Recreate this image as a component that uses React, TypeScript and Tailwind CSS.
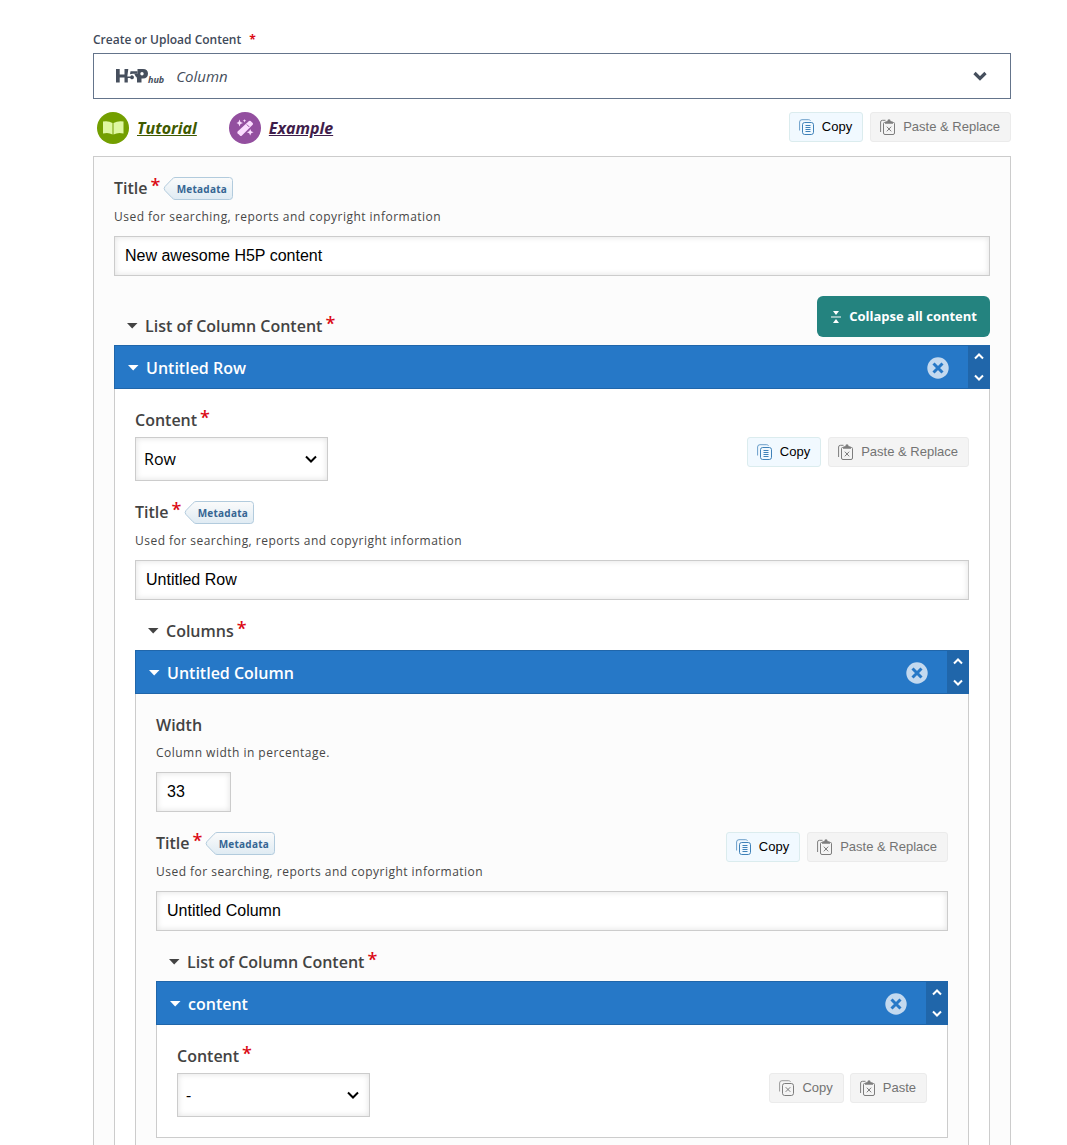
import React, { useId, useState } from "react";

function Required() {
  return <span className="ml-[3px] pb-1.5 text-lg leading-none font-semibold text-[#db0a15]" aria-hidden="true">*</span>;
}

function FieldLabel({ htmlFor, required, children }: { htmlFor: string; required?: boolean; children: React.ReactNode }) {
  return (
    <label htmlFor={htmlFor} className="flex h-[22px] items-center text-base leading-[22px] font-semibold text-[#434343]">
      {children}
      {required && <Required />}
    </label>
  );
}

function Description({ children }: { children: React.ReactNode }) {
  return <p className="mt-[7px] mb-[9px] text-xs leading-5 tracking-[0.04em] text-[#474747]">{children}</p>;
}

function TextInput({ id, value, narrow }: { id: string; value: string; narrow?: boolean }) {
  return (
    <input
      id={id}
      type="text"
      defaultValue={value}
      className={
        "block h-10 border border-[#ccc] bg-white px-2.5 font-['Liberation_Sans',Arial,sans-serif] text-base text-black shadow-[inset_0_0_6px_rgba(0,0,0,0.12)] outline-none " +
        (narrow ? "w-[75px]" : "w-full")
      }
    />
  );
}

function MetadataButton() {
  const id = useId();
  return (
    <button type="button" className="relative ml-[3px] h-[23px] w-[70px] pl-[7px] text-[10px] leading-[22px] font-bold tracking-wide text-[#356593]">
      <svg className="absolute inset-0" width="70" height="23" viewBox="0 0 70 23" aria-hidden="true">
        <defs>
          <linearGradient id={id} x1="0" y1="0" x2="0" y2="1">
            <stop offset="0" stopColor="#fbfbfb" />
            <stop offset="1" stopColor="#dfebf3" />
          </linearGradient>
        </defs>
        <path
          d="M12 .5H66.500Q69.500 .5 69.500 3.500V19.500Q69.500 22.500 66.500 22.500H12Q10.500 22.500 9 20.800L2 13.500Q.3 11.500 2 9.500L9 2.200Q10.500 .5 12 .5Z"
          fill={`url(#${id})`}
          stroke="#b2cbdd"
        />
      </svg>
      <span className="relative">Metadata</span>
    </button>
  );
}

function CopyIcon({ disabled }: { disabled?: boolean }) {
  return (
    <svg width="15" height="16" viewBox="0 0 15 16" fill="none" stroke="currentColor" aria-hidden="true">
      <path d="M.6 11.500V3Q.6.700 3 .7H9.500Q11 .7 11.500 1.700" opacity=".75" />
      <rect x="3.500" y="3.500" width="11" height="12" rx="2.200" />
      {disabled ? (
        <path d="M6.700 7.200L11.300 11.800M11.300 7.200L6.700 11.800" />
      ) : (
        <path d="M6.500 6.500H11.500M6.500 8.500H11.500M6.500 10.500H11.500M6.500 12.500H11.500" />
      )}
    </svg>
  );
}

function PasteIcon() {
  return (
    <svg width="15" height="16" viewBox="0 0 15 16" fill="none" stroke="currentColor" aria-hidden="true">
      <path d="M.6 13V3Q.6 1.300 2.500 1.300H5.500" />
      <path d="M5 3.500H4.500Q3.500 3.500 3.500 4.500V14Q3.500 15.500 5 15.500H13Q14.500 15.500 14.500 14V4.500Q14.500 3.500 13.500 3.500H13" />
      <path d="M5 4.800V3.500Q5 2.300 6.500 2.200H7.300Q7.500 .3 9 .3Q10.500 .3 10.700 2.200H11.500Q13 2.300 13 3.500V4.800Z" fill="currentColor" stroke="none" />
      <path d="M6.800 7.700L11.200 12.300M11.200 7.700L6.800 12.300" />
    </svg>
  );
}

function ToolButton({ kind, disabled, children }: { kind: "copy" | "paste"; disabled?: boolean; children: React.ReactNode }) {
  return (
    <button
      type="button"
      disabled={disabled}
      className={
        "flex h-[30px] items-center gap-2 rounded-[3px] border pr-2.5 pl-[9px] font-['Liberation_Sans',Arial,sans-serif] text-[13px] whitespace-nowrap " +
        (disabled ? "border-[#ebebeb] bg-[#f4f4f4] text-[#737373]" : "border-[#dbecee] bg-[#f1f9ff] text-black")
      }
    >
      <span className={disabled ? "text-[#7d7d7d]" : "text-[#3f81b8]"}>
        {kind === "copy" ? <CopyIcon disabled={disabled} /> : <PasteIcon />}
      </span>
      {children}
    </button>
  );
}

function CopyPaste() {
  return (
    <div className="flex gap-[7px]">
      <ToolButton kind="copy">Copy</ToolButton>
      <ToolButton kind="paste" disabled>Paste &amp; Replace</ToolButton>
    </div>
  );
}

function Caret() {
  return (
    <svg width="11" height="6" viewBox="0 0 11 6" fill="currentColor" aria-hidden="true">
      <path d="M0 0H10.500L5.200 5.500Z" />
    </svg>
  );
}

function ListLabel({ children }: { children: React.ReactNode }) {
  return (
    <button type="button" className="ml-[13px] flex h-[22px] items-center text-base leading-[22px] font-semibold text-[#434343]">
      <Caret />
      <span className="ml-[7px]">{children}</span>
      <Required />
    </button>
  );
}

function Chevron({ up }: { up?: boolean }) {
  return (
    <svg width="10" height="7" viewBox="0 0 10 7" fill="none" stroke="currentColor" strokeWidth="2" aria-hidden="true">
      <path d={up ? "M1 5.500L5 1.500L9 5.500" : "M1 1.500L5 5.500L9 1.500"} />
    </svg>
  );
}

function Panel({ title, tinted, children }: { title: string; tinted?: boolean; children: React.ReactNode }) {
  return (
    <section>
      <header className="flex h-11 border border-[#2066aa] bg-[#2678c7] text-white">
        <button type="button" className="flex flex-1 items-center pt-0.5 pl-[13px] text-base font-semibold">
          <Caret />
          <span className="ml-[7px]">{title}</span>
        </button>
        <button type="button" aria-label={"Remove " + title} className="mr-[19px] pt-0.5">
          <svg width="22" height="22" viewBox="0 0 22 22" aria-hidden="true">
            <circle cx="11" cy="11" r="10.700" fill="#c3d9ef" />
            <path d="M6.500 6.500L15.500 15.500M15.500 6.500L6.500 15.500" stroke="#2678c7" strokeWidth="3" />
          </svg>
        </button>
        <div className="flex w-[21px] flex-col bg-[#2066aa]">
          <button type="button" aria-label="Move up" className="flex flex-1 items-center justify-center">
            <Chevron up />
          </button>
          <button type="button" aria-label="Move down" className="flex flex-1 items-center justify-center">
            <Chevron />
          </button>
        </div>
      </header>
      <div className={"flex flex-col gap-5 border border-t-0 border-[#ccc] p-5 " + (tinted ? "bg-[#fcfcfc]" : "bg-white")}>{children}</div>
    </section>
  );
}

function TitleField({ value, tools }: { value: string; tools?: boolean }) {
  const id = useId();
  return (
    <div>
      <div className="flex items-start justify-between">
        <div>
          <div className="flex h-[23px]">
            <FieldLabel htmlFor={id} required>Title</FieldLabel>
            <MetadataButton />
          </div>
          <Description>Used for searching, reports and copyright information</Description>
        </div>
        {tools && <CopyPaste />}
      </div>
      <TextInput id={id} value={value} />
    </div>
  );
}

function ContentField({ value, children }: { value: string; children: React.ReactNode }) {
  const id = useId();
  return (
    <div className="flex items-start justify-between">
      <div>
        <FieldLabel htmlFor={id} required>Content</FieldLabel>
        <div className="relative mt-1.5">
          <select
            id={id}
            defaultValue={value}
            className="block h-11 w-[193px] appearance-none border border-[#ccc] bg-white px-2 text-base text-black shadow-[inset_0_0_6px_rgba(0,0,0,0.12)] outline-none"
          >
            <option>{value}</option>
          </select>
          <svg className="pointer-events-none absolute top-[18px] right-[11px]" width="12" height="9" viewBox="0 0 12 9" fill="none" stroke="#000" strokeWidth="2" aria-hidden="true">
            <path d="M1 1.500L6 6.500L11 1.500" />
          </svg>
        </div>
      </div>
      <div className="mt-7">{children}</div>
    </div>
  );
}

function HubLogo() {
  return (
    <span className="flex items-end text-[#464f5d]">
      <svg width="32" height="14" viewBox="0 0 32 14" aria-label="H5P" role="img">
        <g fill="currentColor">
          <path d="M0 0H3.700V5.500H8.500V0H12.300L11.300 7.400H14.300Q15.200 6 16.700 6.500Q18.400 7.200 17.900 9Q17.200 10.600 15.500 10.300Q14.500 10 14.100 9H11.800V13.500H8.500V8.500H3.700V13.500H0Z" />
          <path d="M14.500 2.200H21.500V4.800H18Q15.500 4.600 14 5.300Z" />
          <path d="M21.500 0H27Q32 .2 32 4.800Q31.800 9.500 27 9.500H25.500V13.500H21V10Q21 8 19.500 7.200Q19 5.500 18 4.800H21.500Z" />
        </g>
        <circle cx="26" cy="4.800" r="1.700" fill="#fff" />
      </svg>
      <span className="-mb-0.5 text-[9px] leading-[10px] font-bold italic">hub</span>
    </span>
  );
}

function Guide({ href, kind }: { href: string; kind: "Tutorial" | "Example" }) {
  const tutorial = kind === "Tutorial";
  return (
    <a href={href} className={"flex items-center gap-2 text-base font-bold italic underline " + (tutorial ? "text-[#3f5a00]" : "text-[#3f1d4b]")}>
      {tutorial ? (
        <svg width="32" height="32" viewBox="0 0 32 32" aria-hidden="true">
          <circle cx="16" cy="16" r="16" fill="#739f00" />
          <path d="M6 9.500Q11.500 8.500 15.500 11V22.500Q11.500 20 6 21.500Z" fill="#dff7a2" />
          <path d="M26.500 9.500Q21 8.500 16.500 11V22.500Q21 20 26.500 21.500Z" fill="#dff7a2" />
        </svg>
      ) : (
        <svg width="32" height="32" viewBox="0 0 32 32" aria-hidden="true">
          <circle cx="16" cy="16" r="16" fill="#934f9f" />
          <g fill="#fbdcff">
            <path d="M20 9Q20.800 8.300 21.600 9L23.700 11.100Q24.400 11.900 23.700 12.700L12.700 23.700Q11.900 24.400 11.100 23.700L8.600 21.200Q7.900 20.400 8.600 19.600Z" />
            <path d="M10.500 7.500L11.500 10L14 11L11.500 12L10.500 14.500L9.500 12L7.500 11L9.500 10Z" />
            <path d="M15.500 7L16 8.300L17.300 8.800L16 9.300L15.500 10.600L15 9.300L13.700 8.800L15 8.300Z" />
            <path d="M21.200 17L22.200 19.300L24.500 20.300L22.200 21.300L21.200 23.600L20.200 21.300L17.900 20.300L20.200 19.300Z" />
          </g>
          <path d="M17.800 12.500L20.200 14.900" stroke="#934f9f" strokeWidth="1" />
        </svg>
      )}
      {kind}
    </a>
  );
}

export default function App() {
  const [open, setOpen] = useState(false);
  const widthId = useId();
  return (
    <main className="min-h-screen bg-white pt-8 pr-14 pl-[93px] font-['Open_Sans','Noto_Sans',sans-serif]">
      <div className="flex h-[21px] items-start text-xs leading-4 font-semibold text-[#3f4a5a]">
        <label htmlFor="content-type">Create or Upload Content</label>
        <span className="ml-2 font-bold text-[#db0a15]" aria-hidden="true">*</span>
      </div>
      <button
        id="content-type"
        type="button"
        aria-expanded={open}
        onClick={() => setOpen(!open)}
        className="flex h-[46px] w-full items-center border border-[#64748b] pr-[23px] pl-[22px] text-[#464f5d]"
      >
        <HubLogo />
        <span className="ml-3 text-[15px] italic">Column</span>
        <svg className="ml-auto" width="14" height="10" viewBox="0 0 14 10" fill="none" stroke="currentColor" strokeWidth="3.200" aria-hidden="true">
          <path d="M1.500 2L7 7.500L12.500 2" />
        </svg>
      </button>
      <div className="mt-[13px] mb-3 flex items-start justify-between pl-1">
        <nav className="flex gap-8">
          <Guide kind="Tutorial" href="#tutorial" />
          <Guide kind="Example" href="#example" />
        </nav>
        <CopyPaste />
      </div>

      <form className="flex flex-col gap-5 border border-[#ccc] bg-[#fcfcfc] p-5">
        <TitleField value="New awesome H5P content" />
        <div>
          <div className="mb-2 flex items-end justify-between">
            <ListLabel>List of Column Content</ListLabel>
            <button type="button" className="flex h-[41px] items-center gap-2 rounded-md bg-[#24837f] pr-[13px] pl-3.5 text-[13px] font-bold text-white">
              <svg width="10" height="12" viewBox="0 0 10 12" fill="currentColor" aria-hidden="true">
                <path d="M2 0H8L5 4Z M0 5.500H10V6.500H0Z M5 8L8 12H2Z" />
              </svg>
              Collapse all content
            </button>
          </div>
          <Panel title="Untitled Row">
            <ContentField value="Row">
              <CopyPaste />
            </ContentField>
            <TitleField value="Untitled Row" />
            <div>
              <div className="mb-2">
                <ListLabel>Columns</ListLabel>
              </div>
              <Panel title="Untitled Column" tinted>
                <div>
                  <FieldLabel htmlFor={widthId}>Width</FieldLabel>
                  <Description>Column width in percentage.</Description>
                  <TextInput id={widthId} value="33" narrow />
                </div>
                <TitleField value="Untitled Column" tools />
                <div>
                  <div className="mb-2">
                    <ListLabel>List of Column Content</ListLabel>
                  </div>
                  <Panel title="content">
                    <ContentField value="-">
                      <div className="flex gap-1.5">
                        <ToolButton kind="copy" disabled>Copy</ToolButton>
                        <ToolButton kind="paste" disabled>Paste</ToolButton>
                      </div>
                    </ContentField>
                  </Panel>
                </div>
              </Panel>
            </div>
          </Panel>
        </div>
      </form>
    </main>
  );
}
